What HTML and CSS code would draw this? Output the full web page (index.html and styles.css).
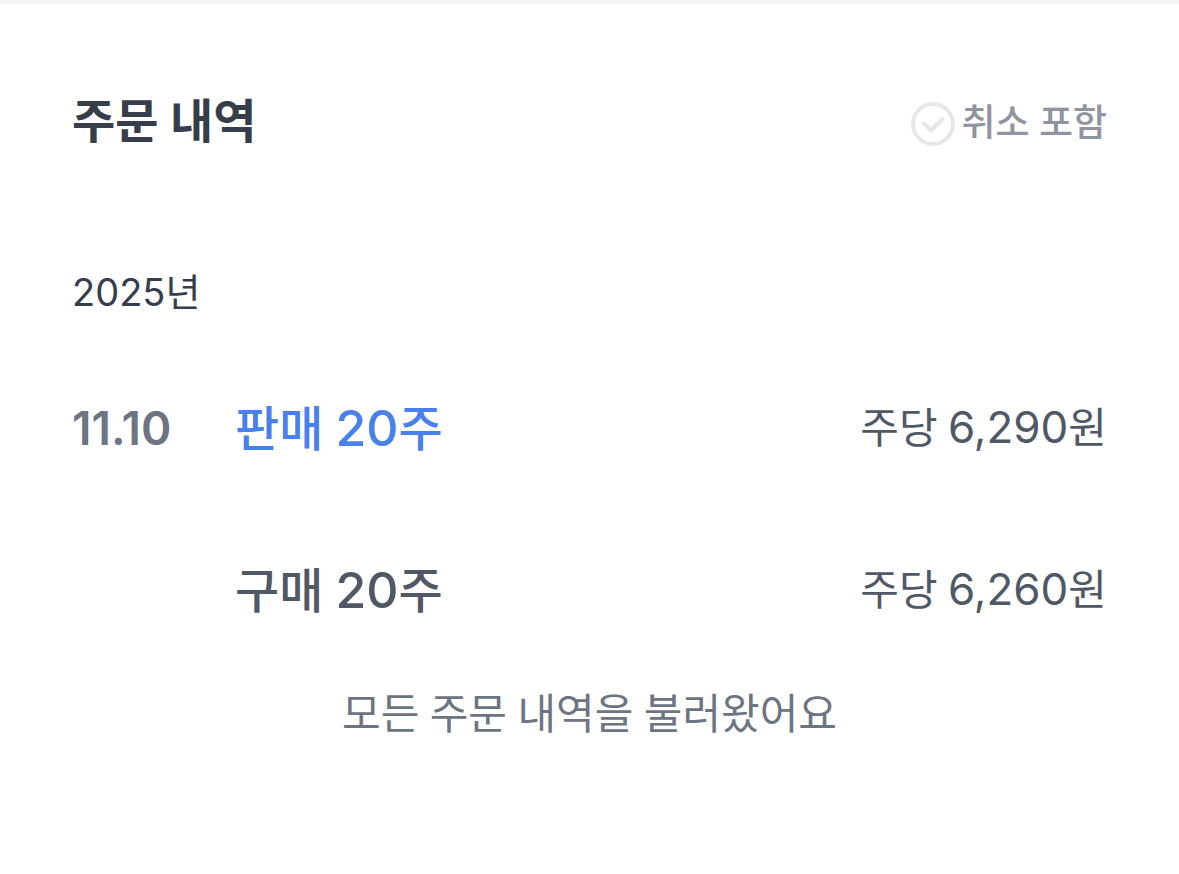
FILE: index.html
```html
<!DOCTYPE html>
<html lang="ko">
<head>
<meta charset="utf-8">
<meta name="viewport" content="width=device-width, initial-scale=1">
<title>주문 내역</title>
<link rel="stylesheet" href="styles.css">
</head>
<body>
<main class="orders">
  <header class="orders-header">
    <h1 class="orders-title">주문 내역</h1>
    <label class="toggle">
      <span class="toggle-mark">
        <input class="toggle-input" type="checkbox">
        <svg class="toggle-icon" viewBox="0 0 44 44" aria-hidden="true">
          <circle cx="22" cy="22" r="20"/>
          <path d="M13 21.500l7 7L31.500 17"/>
        </svg>
      </span>
      <span class="toggle-text">취소 포함</span>
    </label>
  </header>
  <h2 class="year"><span class="num">2025</span>년</h2>
  <ul class="order-list">
    <li class="order">
      <time class="order-date num" datetime="2025-11-10">11.10</time>
      <span class="order-name sell">판매 <span class="num name-num">20</span>주</span>
      <span class="order-price">주당 <span class="num price-num">6,290</span>원</span>
    </li>
    <li class="order">
      <span class="order-name">구매 <span class="num name-num">20</span>주</span>
      <span class="order-price">주당 <span class="num price-num">6,260</span>원</span>
    </li>
  </ul>
  <p class="end-note">모든 주문 내역을 불러왔어요</p>
</main>
</body>
</html>
```
FILE: styles.css
```css
* {
  box-sizing: border-box;
}

body {
  margin: 0;
  background: #fff;
  font-family: Roboto, "Noto Sans CJK KR", sans-serif;
  color: #505866;
}

.num {
  font-family: Inter, "Noto Sans CJK KR", sans-serif;
}

.orders {
  border-top: 4px solid #f2f3f5;
  padding: 80px 72px;
}

.orders-header {
  display: flex;
  justify-content: space-between;
  align-items: center;
}

.orders-title,
.toggle,
.order-name {
  font-family: Lato, "Noto Sans CJK KR", sans-serif;
}

.orders-title {
  margin: 0;
  font-size: 47px;
  line-height: 72px;
  font-weight: 700;
  color: #363d4b;
}

.toggle {
  display: flex;
  align-items: center;
  gap: 6px;
  padding-top: 8px;
  font-size: 37px;
  line-height: 56px;
  font-weight: 500;
  color: #8f94a0;
}

.toggle-text {
  padding-bottom: 4px;
}

.toggle-mark {
  display: grid;
  width: 44px;
  height: 44px;
}

.toggle-input,
.toggle-icon {
  grid-area: 1 / 1;
  width: 44px;
  height: 44px;
  margin: 0;
}

.toggle-input {
  appearance: none;
}

.toggle-icon {
  pointer-events: none;
  fill: none;
  stroke: #e6e7ea;
  stroke-width: 4;
  stroke-linecap: round;
  stroke-linejoin: round;
}

.toggle-input:checked + .toggle-icon {
  stroke: #4880ee;
}

.year {
  margin: 106px 0 0;
  font-size: 38px;
  line-height: 60px;
  font-weight: 400;
  color: #363d4b;
}

.order-list {
  list-style: none;
  margin: 64px 0 0;
  padding: 0;
  display: grid;
  gap: 80px;
}

.order {
  display: grid;
  grid-template-columns: 163px 1fr auto;
  align-items: center;
  line-height: 80px;
}

.order-date {
  font-size: 46px;
  font-weight: 600;
  color: #6d7482;
}

.order-name {
  grid-column: 2;
  font-size: 48px;
  font-weight: 500;
}

.sell {
  color: #4880ee;
}

.name-num {
  font-size: 50px;
}

.order-price {
  font-size: 42px;
}

.price-num {
  font-size: 44px;
}

.end-note {
  margin: 52px 0 0;
  font-size: 42px;
  line-height: 64px;
  text-align: center;
  color: #6d7482;
}
```
